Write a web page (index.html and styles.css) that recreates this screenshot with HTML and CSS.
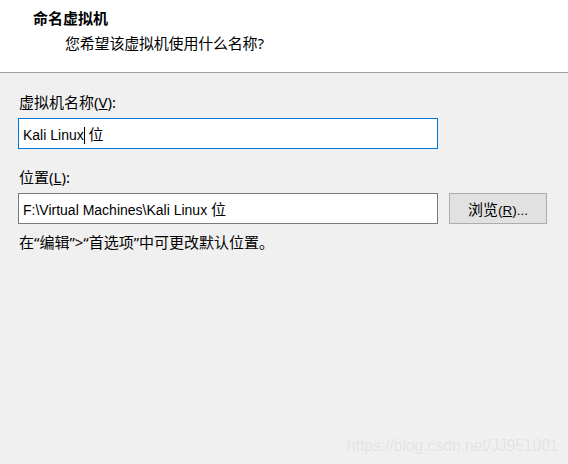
FILE: index.html
```html
<!DOCTYPE html>
<html lang="zh-CN">
<head>
<meta charset="utf-8">
<link rel="stylesheet" href="styles.css">
</head>
<body>
<div class="header">
  <div class="title">命名虚拟机</div>
  <div class="subtitle">您希望该虚拟机使用什么名称?</div>
</div>
<div class="content">
  <div class="label">虚拟机名称(<u>V</u>):</div>
  <div class="row">
    <div class="input focused">Kali Linux<span class="caret"></span> <span class="cjk">位</span></div>
  </div>
  <div class="label label2">位置(<u>L</u>):</div>
  <div class="row">
    <div class="input">F:\Virtual Machines\Kali Linux <span class="cjk">位</span></div>
    <div class="button"><span class="cjk">浏览</span>(<u>R</u>)...</div>
  </div>
  <div class="hint">在“编辑”&gt;“首选项”中可更改默认位置。</div>
</div>
<div class="watermark">https://blog.csdn.net/JJ951001</div>
</body>
</html>
```
FILE: styles.css
```css
html, body {
  margin: 0;
  padding: 0;
}
body {
  width: 568px;
  height: 464px;
  background: #f0f0f0;
  font-family: "Noto Sans", "Noto Sans CJK SC", sans-serif;
  font-size: 15px;
  color: #000;
  overflow: hidden;
  position: relative;
}
.header {
  background: #fff;
  border-bottom: 1px solid #a0a0a0;
  box-sizing: border-box;
  height: 73px;
}
.title {
  font-family: "Noto Sans CJK SC", sans-serif;
  font-weight: bold;
  font-size: 15px;
  line-height: 20px;
  padding: 8px 0 0 33px;
}
.subtitle {
  font-size: 15px;
  line-height: 20px;
  padding: 5px 0 0 65px;
  letter-spacing: -0.2px;
}
.content {
  padding: 19px 0 0 18px;
}
.label {
  padding-left: 1px;
  line-height: 20px;
  height: 20px;
}
.label2 {
  margin-top: 18px;
}
.row {
  display: flex;
  align-items: center;
  gap: 11px;
  margin-top: 6px;
}
.input {
  width: 420px;
  height: 31px;
  box-sizing: border-box;
  background: #fff;
  border: 1px solid #7a7a7a;
  padding: 0 4px;
  line-height: 29px;
  white-space: nowrap;
  font-family: "Liberation Sans", "Noto Sans CJK SC", sans-serif;
  font-size: 14px;
}
.input.focused {
  border-color: #0078d7;
}
.cjk {
  font-family: "Noto Sans CJK SC", sans-serif;
  font-size: 15px;
}
.caret {
  display: inline-block;
  width: 1px;
  height: 17px;
  background: #000;
  vertical-align: -4px;
}
.button {
  width: 98px;
  height: 31px;
  box-sizing: border-box;
  background: #e1e1e1;
  border: 1px solid #adadad;
  text-align: center;
  line-height: 29px;
  font-family: "Liberation Sans", "Noto Sans CJK SC", sans-serif;
  font-size: 13.5px;
}
.hint {
  margin-top: 8px;
  padding-left: 1px;
  line-height: 20px;
}
.watermark {
  position: absolute;
  left: 347px;
  top: 437px;
  font-family: "Liberation Sans", Arial, sans-serif;
  font-size: 15.6px;
  color: #e2e2e2;
  text-shadow: 0 0 1px #fafafa;
}
```
